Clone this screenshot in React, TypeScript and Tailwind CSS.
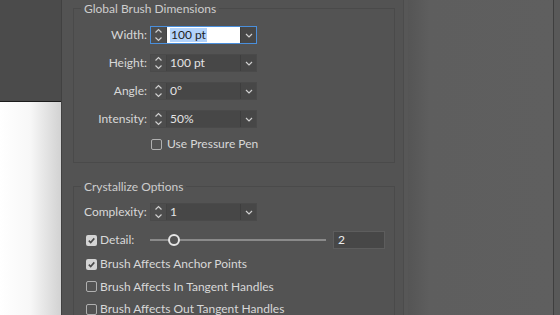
import React from "react"

const Spin = () => (
    <div className="w-[16px] h-full flex items-center justify-center bg-[#4d4d4d] border-r border-[#434343]">
        <svg width="9" height="14" viewBox="0 0 9 14" fill="none" stroke="#cfcfcf" strokeWidth="1.2">
            <path d="M1.5 4.5 L4.5 1.5 L7.5 4.5" />
            <path d="M1.5 9.5 L4.5 12.5 L7.5 9.5" />
        </svg>
    </div>
)

const Caret = () => (
    <div className="w-[16px] h-full flex items-center justify-center bg-[#474747] border-l border-[#3e3e3e]">
        <svg width="8" height="5" viewBox="0 0 8 5" fill="none" stroke="#cfcfcf" strokeWidth="1.2">
            <path d="M1 1 L4 4 L7 1" />
        </svg>
    </div>
)

const Field = ({ value, focused }: { value: string; focused?: boolean }) => (
    <div
        className={`flex h-[18px] w-[107px] border ${
            focused ? "border-[#4a8fdc]" : "border-[#4a4a4a]"
        }`}
    >
        <Spin />
        <div
            className={`flex-1 flex items-center pl-[3px] ${
                focused ? "bg-white" : "bg-[#474747]"
            }`}
        >
            {focused ? (
                <span className="bg-[#b3d3fb] text-[#1e1e1e] leading-[14px] px-[1px]">{value}</span>
            ) : (
                <span className="text-[#e4e4e4]">{value}</span>
            )}
        </div>
        <Caret />
    </div>
)

const Check = ({ on }: { on?: boolean }) => (
    <div
        className={`w-[11px] h-[11px] rounded-[2px] flex items-center justify-center ${
            on ? "bg-[#d4d4d4]" : "border border-[#b0b0b0]"
        }`}
    >
        {on && (
            <svg width="9" height="9" viewBox="0 0 9 9" fill="none" stroke="#4a4a4a" strokeWidth="1.6">
                <path d="M1.8 4.6 L3.7 6.5 L7.3 2.4" />
            </svg>
        )}
    </div>
)

const Row = ({ label, value, focused }: { label: string; value: string; focused?: boolean }) => (
    <div className="flex items-center h-[18px] pl-[10px]">
        <span className="w-[66px] text-right pr-[3px]">{label}</span>
        <Field value={value} focused={focused} />
    </div>
)

const CheckRow = ({ label, on }: { label: string; on?: boolean }) => (
    <div className="flex items-center gap-[3px] h-[22.5px] pl-[12px]">
        <Check on={on} />
        <span>{label}</span>
    </div>
)

export default function App() {
    return (
        <div
            className="flex w-[560px] h-[315px] overflow-hidden bg-[#5e5e5e] text-[12px] text-[#d8d8d8]"
            style={{ fontFamily: "Lato, 'Noto Sans', sans-serif" }}
        >
            <div className="w-[61px] flex flex-col shrink-0">
                <div className="h-[102px] bg-[#4b4b4b] border-b border-[#1c1c1c]" />
                <div className="flex-1 bg-gradient-to-r from-white via-[#f7f7f7] to-[#d2d2d2]" />
            </div>

            <div className="w-[342px] shrink-0 bg-[#535353] border-l border-[#414141] pl-[11px] pt-[8px]">
                <div className="w-[322px] border border-[#4a4a4a] pb-[9px]">
                    <div className="-mt-[8px] ml-[7px] w-fit px-[3px] bg-[#535353] leading-[16px] text-[#cdcdcd]">
                        Global Brush Dimensions
                    </div>
                    <div className="flex flex-col gap-[10px] mt-[9px]">
                        <Row label="Width:" value="100 pt" focused />
                        <Row label="Height:" value="100 pt" />
                        <Row label="Angle:" value="0°" />
                        <Row label="Intensity:" value="50%" />
                    </div>
                    <div className="flex items-center gap-[5px] h-[18px] mt-[7px] pl-[77px]">
                        <Check />
                        <span>Use Pressure Pen</span>
                    </div>
                </div>

                <div className="w-[322px] h-[200px] mt-[23px] border border-[#4a4a4a]">
                    <div className="-mt-[8px] ml-[7px] w-fit px-[3px] bg-[#535353] leading-[16px] text-[#cdcdcd]">
                        Crystallize Options
                    </div>
                    <div className="flex items-center h-[18px] pl-[10px] mt-[8px]">
                        <span className="w-[66px]">Complexity:</span>
                        <Field value="1" />
                    </div>
                    <div className="flex items-center h-[18px] mt-[10px] pl-[12px]">
                        <Check on />
                        <span className="ml-[3px] w-[50px]">Detail:</span>
                        <div className="relative w-[176px] h-[12px] flex items-center">
                            <div className="w-full h-[2px] bg-[#8a8a8a]" />
                            <div className="absolute left-[18px] top-0 w-[12px] h-[12px] rounded-full border-2 border-[#e6e6e6] bg-[#535353]" />
                        </div>
                        <div className="ml-[7px] w-[52px] h-[18px] bg-[#474747] border border-[#5d5d5d] pl-[4px] flex items-center text-[#ececec]">
                            2
                        </div>
                    </div>
                    <div className="mt-[4px]">
                        <CheckRow label="Brush Affects Anchor Points" on />
                        <CheckRow label="Brush Affects In Tangent Handles" />
                        <CheckRow label="Brush Affects Out Tangent Handles" />
                    </div>
                </div>
            </div>

            <div className="w-[5px] shrink-0 bg-[#575757] border-l border-[#4c4c4c]" />
            <div className="flex-1 bg-gradient-to-r from-[#555555] via-[#5e5e5e] via-15% to-[#5f5f5f]" />
            <div className="w-[7px] shrink-0 bg-[#595959] border-l border-[#3f3f3f]" />
        </div>
    )
}
